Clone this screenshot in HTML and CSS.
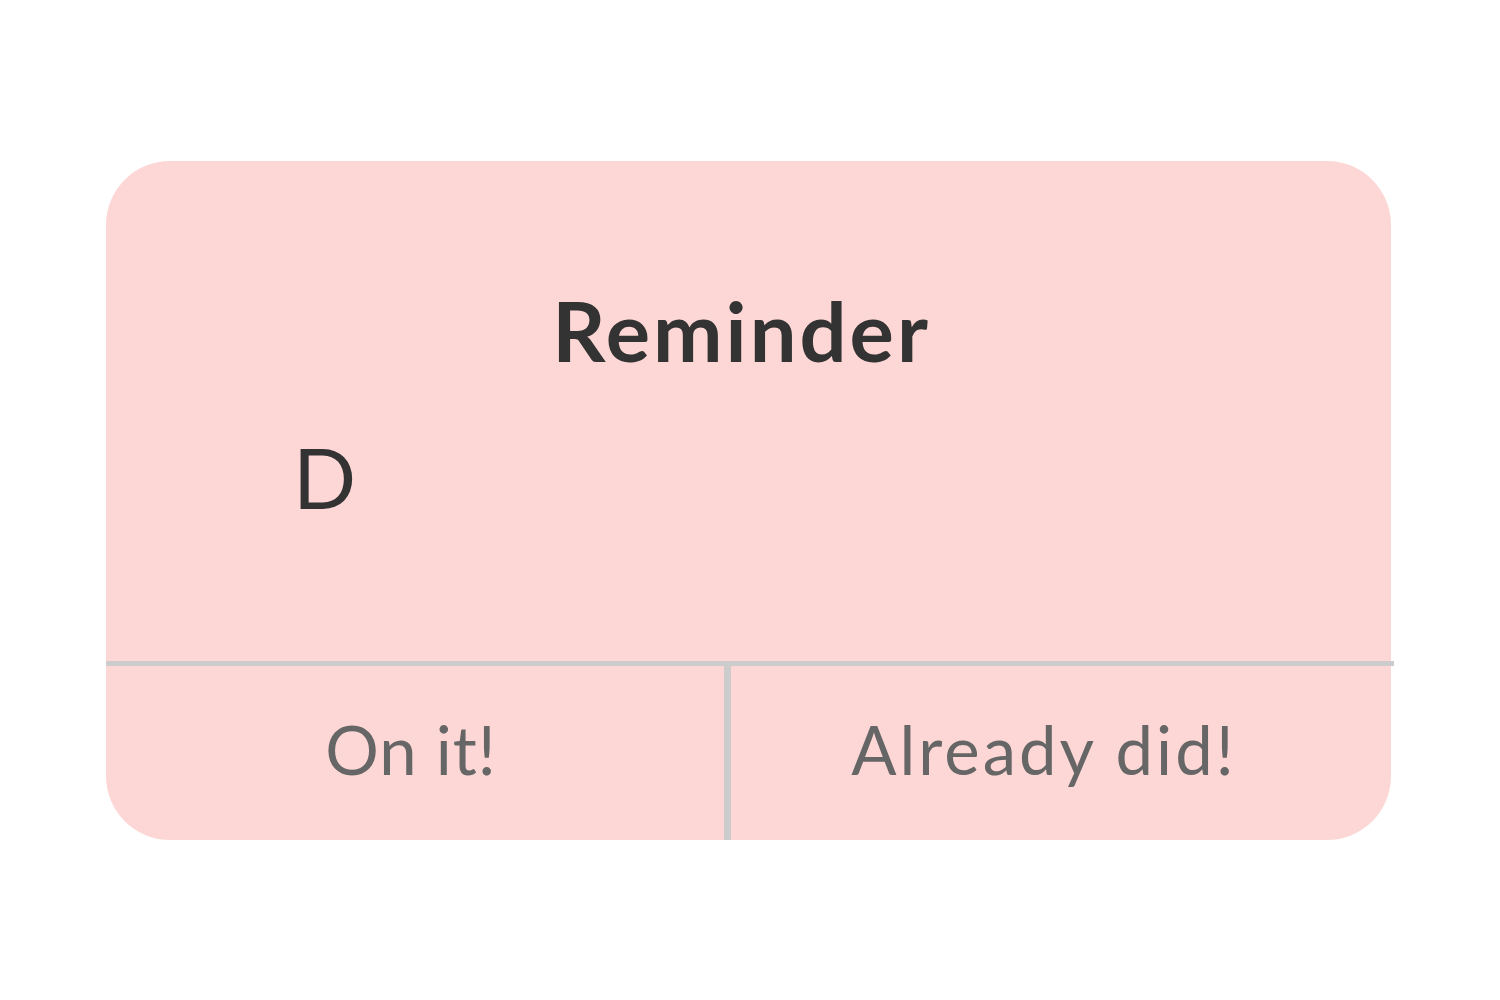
FILE: index.html
```html
<!DOCTYPE html>
<html>
<head>
<meta charset="utf-8">
<link rel="stylesheet" href="styles.css">
</head>
<body>
<div class="card">
  <div class="content">
    <div class="title">Reminder</div>
    <div class="message">D</div>
  </div>
  <div class="divider"></div>
  <div class="actions">
    <div class="action action-left">On it!</div>
    <div class="vline"></div>
    <div class="action action-right">Already did!</div>
  </div>
</div>
</body>
</html>
```
FILE: styles.css
```css
html, body {
  margin: 0;
  padding: 0;
  background: #ffffff;
}
body {
  font-family: "Lato", "Open Sans", sans-serif;
  padding-top: 161px;
  padding-left: 106px;
}
.card {
  width: 1285px;
  height: 679px;
  background: #fdd7d5;
  border-radius: 64px;
  display: flex;
  flex-direction: column;
}
.content {
  height: 500px;
  box-sizing: border-box;
  padding-top: 119px;
}
.title {
  font-size: 83px;
  line-height: 100px;
  font-weight: 700;
  letter-spacing: 3px;
  color: #333333;
  text-align: center;
  padding-right: 14px;
}
.message {
  margin-top: 47px;
  padding-left: 187px;
  font-size: 83px;
  line-height: 100px;
  color: #333333;
}
.divider {
  height: 5px;
  width: 1288px;
  background: #cccccc;
}
.actions {
  flex: 1;
  display: flex;
}
.vline {
  width: 7px;
  background: #cccccc;
}
.action {
  display: flex;
  align-items: center;
  justify-content: center;
  padding-bottom: 8px;
  font-size: 67px;
  color: #666666;
  box-sizing: border-box;
}
.action-left {
  width: 618px;
  letter-spacing: 1px;
  padding-right: 8px;
}
.action-right {
  width: 660px;
  letter-spacing: 3px;
  padding-right: 34px;
}
```
